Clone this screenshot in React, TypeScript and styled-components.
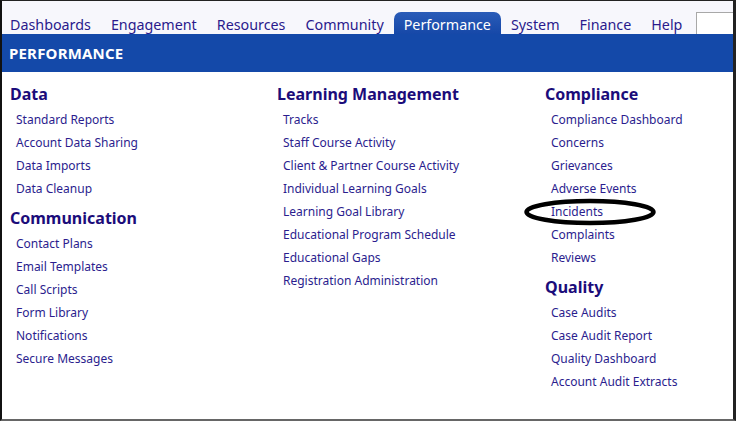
import React from "react";
import styled, { createGlobalStyle } from "styled-components";

const Global = createGlobalStyle`
  html, body { margin: 0; padding: 0; background: #fff; }
  body { font-family: "Noto Sans", "Open Sans", sans-serif; }
  * { box-sizing: border-box; }
`;

const Frame = styled.div`
  width: 736px;
  height: 421px;
  border-top: 1px solid #222;
  border-left: 2px solid #111;
  border-right: 3px solid #222;
  border-bottom: 2px solid #666;
  display: flex;
  flex-direction: column;
  overflow: hidden;
  background: #fff;
`;

const TopNav = styled.nav`
  height: 33px;
  background: #f7f7fc;
  display: flex;
  align-items: flex-end;
  padding-left: 8px;
  gap: 20px;
`;

const NavItem = styled.a<{ $active?: boolean }>`
  font-size: 14.3px;
  line-height: 19px;
  height: 22px;
  display: flex;
  align-items: flex-end;
  color: ${(p) => (p.$active ? "#ffffff" : "#2a1a8c")};
  text-decoration: none;
  padding: 0 ${(p) => (p.$active ? "10px" : "0")};
  margin: 0 ${(p) => (p.$active ? "-10px" : "0")};
  background: ${(p) =>
    p.$active ? "linear-gradient(#2a5cb8, #1648a8)" : "transparent"};
  border-radius: ${(p) => (p.$active ? "7px 7px 0 0" : "0")};
  white-space: nowrap;
`;

const Search = styled.input`
  margin-left: -6px;
  flex: 1;
  height: 22px;
  border: 1px solid #a8a8a8;
  border-bottom: none;
  border-right: none;
  background: #fff;
  outline: none;
`;

const Banner = styled.div`
  height: 38px;
  background: #1449a9;
  color: #fff;
  font-weight: 700;
  font-size: 15px;
  display: flex;
  align-items: center;
  padding-left: 7px;
  letter-spacing: 0.2px;
`;

const Columns = styled.div`
  display: grid;
  grid-template-columns: 267px 268px 1fr;
  padding: 10px 0 0 8px;
`;

const Column = styled.div`
  display: flex;
  flex-direction: column;
  position: relative;
`;

const Heading = styled.h3<{ $first?: boolean }>`
  margin: ${(p) => (p.$first ? "0" : "6px")} 0 0 0;
  padding-bottom: 2px;
  font-size: 16px;
  line-height: 24px;
  font-weight: 700;
  color: #1b0c7a;
`;

const Link = styled.a`
  display: block;
  margin-left: 6px;
  font-size: 12px;
  line-height: 23px;
  color: #2b1d8e;
  text-decoration: none;
  white-space: nowrap;
`;

const Ring = styled.svg`
  position: absolute;
  left: -23px;
  top: 115px;
  pointer-events: none;
`;

type Section = { title: string; links: string[] };

const columns: Section[][] = [
  [
    {
      title: "Data",
      links: ["Standard Reports", "Account Data Sharing", "Data Imports", "Data Cleanup"],
    },
    {
      title: "Communication",
      links: [
        "Contact Plans",
        "Email Templates",
        "Call Scripts",
        "Form Library",
        "Notifications",
        "Secure Messages",
      ],
    },
  ],
  [
    {
      title: "Learning Management",
      links: [
        "Tracks",
        "Staff Course Activity",
        "Client & Partner Course Activity",
        "Individual Learning Goals",
        "Learning Goal Library",
        "Educational Program Schedule",
        "Educational Gaps",
        "Registration Administration",
      ],
    },
  ],
  [
    {
      title: "Compliance",
      links: [
        "Compliance Dashboard",
        "Concerns",
        "Grievances",
        "Adverse Events",
        "Incidents",
        "Complaints",
        "Reviews",
      ],
    },
    {
      title: "Quality",
      links: ["Case Audits", "Case Audit Report", "Quality Dashboard", "Account Audit Extracts"],
    },
  ],
];

const tabs = [
  "Dashboards",
  "Engagement",
  "Resources",
  "Community",
  "Performance",
  "System",
  "Finance",
  "Help",
];

export default function App() {
  return (
    <>
      <Global />
      <Frame>
        <TopNav>
          {tabs.map((t) => (
            <NavItem key={t} href="#" $active={t === "Performance"}>
              {t}
            </NavItem>
          ))}
          <Search aria-label="Search" />
        </TopNav>
        <Banner>PERFORMANCE</Banner>
        <Columns>
          {columns.map((sections, ci) => (
            <Column key={ci}>
              {sections.map((s, si) => (
                <React.Fragment key={s.title}>
                  <Heading $first={si === 0}>{s.title}</Heading>
                  {s.links.map((l) => (
                    <Link key={l} href="#">
                      {l}
                    </Link>
                  ))}
                </React.Fragment>
              ))}
              {ci === 2 && (
                <Ring width="136" height="30" viewBox="0 0 136 30">
                  <ellipse cx="68" cy="15" rx="63.5" ry="11" fill="none" stroke="#000" strokeWidth="4.5" />
                </Ring>
              )}
            </Column>
          ))}
        </Columns>
      </Frame>
    </>
  );
}
